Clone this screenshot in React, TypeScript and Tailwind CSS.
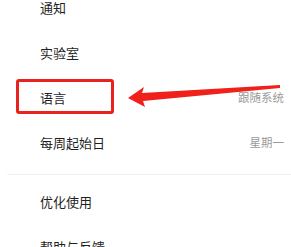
import React from 'react'

const rowsTop = [
  { label: '通知' },
  { label: '实验室' },
  { label: '语言', value: '跟随系统' },
  { label: '每周起始日', value: '星期一' },
]

const rowsBottom = [{ label: '优化使用' }, { label: '帮助与反馈' }]

function Row({ label, value }: { label: string; value?: string }) {
  return (
    <div className="h-[45px] flex items-center justify-between pl-[40px] pr-[7px]">
      <span className="text-[13px] text-[#1f1f1f]">{label}</span>
      {value && <span className="text-[11.5px] text-[#9a9a9a]">{value}</span>}
    </div>
  )
}

export default function App() {
  return (
    <div
      className="relative w-[291px] h-[247px] overflow-hidden bg-white"
      style={{ fontFamily: '"Noto Sans CJK SC", "Noto Sans", sans-serif' }}
    >
      <div className="flex flex-col mt-[-15px]">
        {rowsTop.map(r => (
          <Row key={r.label} {...r} />
        ))}
        <div className="mt-[9px] mb-[4px] ml-[7px] h-px bg-[#f1f1f1]" />
        {rowsBottom.map(r => (
          <Row key={r.label} {...r} />
        ))}
      </div>

      {/* highlight box */}
      <div className="absolute left-[16px] top-[79px] w-[98px] h-[35px] border-[3px] border-[#e8231d] rounded-[3px]" />

      {/* arrow */}
      <svg className="absolute left-0 top-0" width="291" height="247" viewBox="0 0 291 247">
        <polygon
          points="128,98 144,87 142,93 280,85 280,88 143,101 145,107"
          fill="#f0201a"
        />
      </svg>
    </div>
  )
}
